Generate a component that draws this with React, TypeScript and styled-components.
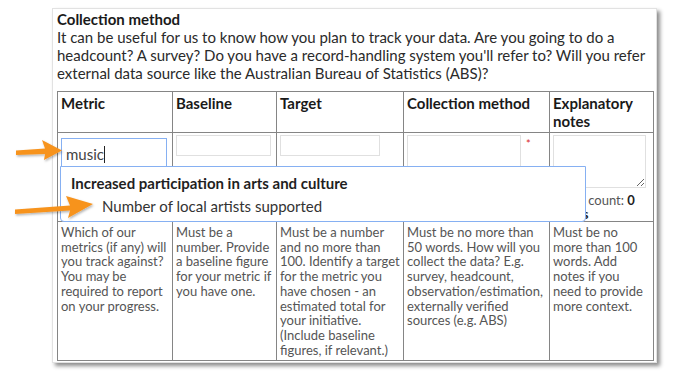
import styled, { createGlobalStyle } from 'styled-components';

const GlobalStyle = createGlobalStyle`
  body {
    margin: 0;
    background: #ffffff;
    font-family: Lato, "Open Sans", sans-serif;
  }
`;

const StyledPage = styled.div`
  position: relative;
  width: 673px;
  height: 378px;
  overflow: hidden;
`;

const StyledCard = styled.div`
  box-sizing: border-box;
  margin: 8px 0 0 52px;
  width: 605px;
  height: 355px;
  padding: 1px 4px 0 4px;
  border: 1px solid #e2e2e2;
  box-shadow: 3px 3px 4px rgba(0, 0, 0, 0.45);
  background: #ffffff;
`;

const StyledTitle = styled.div`
  font-size: 15px;
  line-height: 18px;
  font-weight: 700;
  color: #1a1a1a;
`;

const StyledIntro = styled.p`
  margin: 0 0 9px 0;
  font-size: 15px;
  line-height: 18px;
  color: #2a2a2a;
`;

const StyledTable = styled.table`
  border-collapse: collapse;
  width: 596px;
  table-layout: fixed;
`;

interface cellType {
  width: number;
}

const StyledHeadCell = styled.th<cellType>`
  box-sizing: border-box;
  width: ${(props) => props.width}px;
  height: 40px;
  border: 1px solid #858585;
  padding: 2px 3px;
  vertical-align: top;
  text-align: left;
  font-size: 15px;
  line-height: 18px;
  font-weight: 700;
  color: #1a1a1a;
`;

const StyledInputCell = styled.td`
  position: relative;
  box-sizing: border-box;
  height: 89px;
  border: 1px solid #858585;
  padding: 2px 3px 0 3px;
  vertical-align: top;
`;

const StyledHintCell = styled.td`
  box-sizing: border-box;
  height: 139px;
  border: 1px solid #858585;
  padding: 3px 3px;
  vertical-align: top;
  font-size: 13px;
  line-height: 14.7px;
  color: #555555;
`;

interface inputType {
  inputWidth: number;
}

const StyledTextInput = styled.input<inputType>`
  display: block;
  box-sizing: border-box;
  width: ${(props) => props.inputWidth}px;
  height: 21px;
  border: 1px solid #e0e0e0;
  padding: 0 4px;
  outline: none;
`;

const StyledMetricInput = styled.div`
  box-sizing: border-box;
  margin-top: 3px;
  width: 106px;
  height: 29px;
  border: 1px solid #86b0f2;
  border-bottom: none;
  padding: 6px 0 0 4px;
  font-size: 15px;
  line-height: 18px;
  color: #444444;
`;

const StyledCaret = styled.span`
  display: inline-block;
  width: 1px;
  height: 17px;
  background: #222222;
  vertical-align: -3px;
`;

const StyledDropdown = styled.div`
  position: absolute;
  left: 2px;
  top: 33px;
  z-index: 2;
  box-sizing: border-box;
  width: 526px;
  height: 56px;
  border: 1px solid #86b0f2;
  border-radius: 0 0 4px 4px;
  background: #ffffff;
  padding-top: 6px;
`;

const StyledGroupLabel = styled.div`
  padding-left: 10px;
  font-size: 15px;
  line-height: 20px;
  font-weight: 700;
  color: #1f1f1f;
  white-space: nowrap;
`;

const StyledOption = styled.div`
  padding-left: 41px;
  margin-top: 3px;
  font-size: 15px;
  line-height: 20px;
  color: #333333;
  white-space: nowrap;
`;

const StyledFieldRow = styled.div`
  display: flex;
  align-items: flex-start;
  gap: 5px;
`;

interface areaType {
  areaWidth: number;
}

const StyledTextArea = styled.textarea<areaType>`
  display: block;
  box-sizing: border-box;
  width: ${(props) => props.areaWidth}px;
  height: 53px;
  border: 1px solid #e0e0e0;
  outline: none;
  resize: both;
`;

const StyledRequired = styled.span`
  margin-top: 3px;
  font-size: 11px;
  line-height: 11px;
  color: #d9262b;
`;

const StyledCount = styled.div`
  margin-top: 5px;
  font-size: 13px;
  line-height: 14px;
  color: #555555;

  b {
    color: #222222;
  }
`;

const StyledArrows = styled.svg`
  position: absolute;
  left: 0;
  top: 0;
  z-index: 3;
  pointer-events: none;
`;

export default function App() {
  return (
    <StyledPage>
      <GlobalStyle />
      <StyledCard>
        <StyledTitle>Collection method</StyledTitle>
        <StyledIntro>
          It can be useful for us to know how you plan to track your data. Are you going to do a
          headcount? A survey? Do you have a record-handling system you'll refer to? Will you refer
          external data source like the Australian Bureau of Statistics (ABS)?
        </StyledIntro>
        <StyledTable>
          <thead>
            <tr>
              <StyledHeadCell width={115}>Metric</StyledHeadCell>
              <StyledHeadCell width={104}>Baseline</StyledHeadCell>
              <StyledHeadCell width={127}>Target</StyledHeadCell>
              <StyledHeadCell width={146}>Collection method</StyledHeadCell>
              <StyledHeadCell width={104}>Explanatory notes</StyledHeadCell>
            </tr>
          </thead>
          <tbody>
            <tr>
              <StyledInputCell>
                <StyledMetricInput>
                  music
                  <StyledCaret />
                </StyledMetricInput>
                <StyledDropdown>
                  <StyledGroupLabel>Increased participation in arts and culture</StyledGroupLabel>
                  <StyledOption>Number of local artists supported</StyledOption>
                </StyledDropdown>
              </StyledInputCell>
              <StyledInputCell>
                <StyledTextInput inputWidth={95} />
              </StyledInputCell>
              <StyledInputCell>
                <StyledTextInput inputWidth={100} />
              </StyledInputCell>
              <StyledInputCell>
                <StyledFieldRow>
                  <StyledTextArea areaWidth={114} />
                  <StyledRequired>*</StyledRequired>
                </StyledFieldRow>
              </StyledInputCell>
              <StyledInputCell>
                <StyledTextArea areaWidth={93} />
                <StyledCount>
                  Word count: <b>0 words</b>
                </StyledCount>
              </StyledInputCell>
            </tr>
            <tr>
              <StyledHintCell>
                Which of our metrics (if any) will you track against? You may be required to report
                on your progress.
              </StyledHintCell>
              <StyledHintCell>
                Must be a number. Provide a baseline figure for your metric if you have one.
              </StyledHintCell>
              <StyledHintCell>
                Must be a number and no more than 100. Identify a target for the metric you have
                chosen - an estimated total for your initiative. (Include baseline figures, if
                relevant.)
              </StyledHintCell>
              <StyledHintCell>
                Must be no more than 50 words. How will you collect the data? E.g. survey,
                headcount, observation/estimation, externally verified sources (e.g. ABS)
              </StyledHintCell>
              <StyledHintCell>
                Must be no more than 100 words. Add notes if you need to provide more context.
              </StyledHintCell>
            </tr>
          </tbody>
        </StyledTable>
      </StyledCard>
      <StyledArrows width="673" height="378" viewBox="0 0 673 378">
        <defs>
          <filter id="arrowShadow" x="-20%" y="-40%" width="140%" height="180%">
            <feDropShadow dx="1" dy="1.5" stdDeviation="1" floodColor="#000" floodOpacity="0.3" />
          </filter>
        </defs>
        <g fill="#f7931e" filter="url(#arrowShadow)">
          <path d="M16 150.5 L45 148.5 L42 140 L62 150.5 L44 160 L45 154 L16 155 Z" />
          <path d="M15 209.5 L70 205.5 L66 196 L93 204 L68 218 L70 210.5 L15 214 Z" />
        </g>
      </StyledArrows>
    </StyledPage>
  );
}
